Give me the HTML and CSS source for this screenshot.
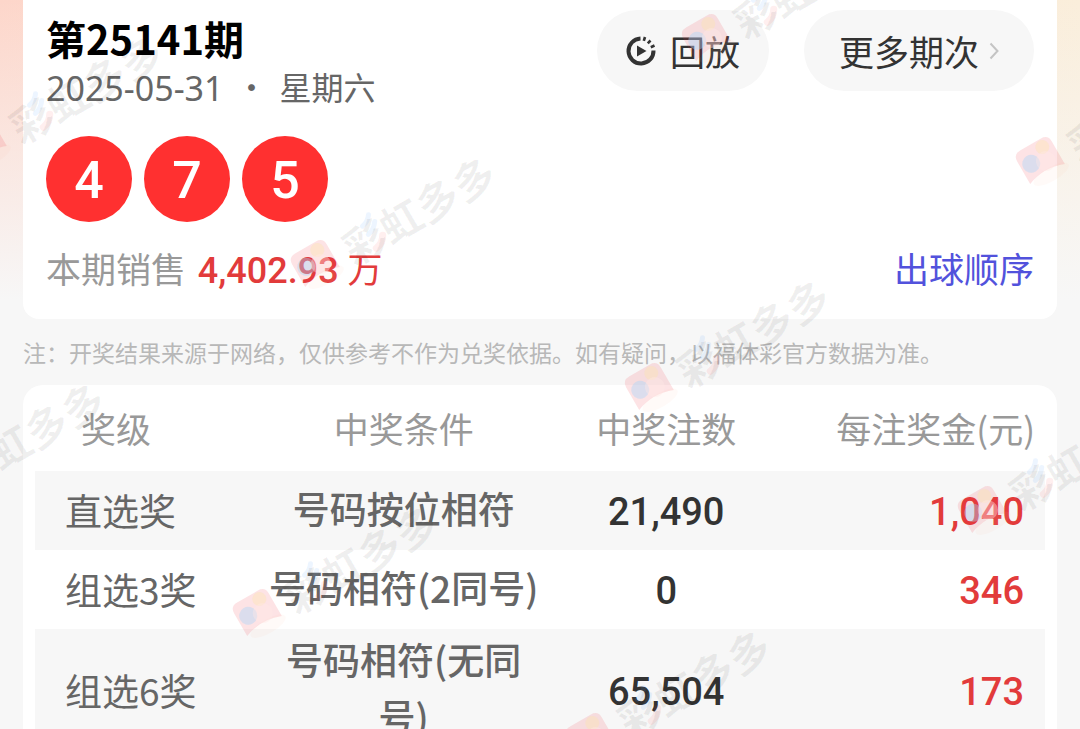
FILE: index.html
```html
<!DOCTYPE html>
<html lang="zh-CN">
<head>
  <meta charset="UTF-8">
  <meta name="viewport" content="width=device-width, initial-scale=1">
  <title>开奖详情</title>
  <link rel="stylesheet" href="styles.css">
</head>
<body>

<!-- Draw result -->
<section class="card draw">
  <div class="draw-top">
    <div class="draw-info">
      <h1>第25141期</h1>
      <p class="draw-date"><span class="date">2025-05-31</span><span>·</span><span>星期六</span></p>
    </div>
    <div class="actions">
      <button type="button" class="pill pill-replay">
        <svg class="icon-replay" viewBox="0 0 30 30" aria-hidden="true">
          <path d="M14.500 2.500 A12.500 12.500 0 1 0 27.500 14.500" fill="none" stroke="#333" stroke-width="4"/>
          <path d="M19 1 L17.800 4.800 M24.500 4.500 L21.800 7.400 M28.500 9.500 L24.800 11.200" stroke="#333" stroke-width="2.600"/>
          <path d="M11 9.500 L20.500 15 L11 20.500 Z" fill="#333"/>
        </svg>
        回放
      </button>
      <button type="button" class="pill pill-more">
        更多期次
        <svg class="icon-arrow" viewBox="0 0 10 18" aria-hidden="true">
          <path d="M1.500 1.500 L8.500 9 L1.500 16.500" fill="none" stroke="#c4c4c4" stroke-width="2"/>
        </svg>
      </button>
    </div>
  </div>

  <div class="balls">
    <span class="ball">4</span>
    <span class="ball">7</span>
    <span class="ball">5</span>
  </div>

  <div class="sales">
    <p>本期销售 <strong>4,402.93 <span class="unit">万</span></strong></p>
    <a href="#">出球顺序</a>
  </div>
</section>

<p class="note">注：开奖结果来源于网络，仅供参考不作为兑奖依据。如有疑问，以福体彩官方数据为准。</p>

<!-- Prize table -->
<section class="card prizes">
  <table>
    <thead>
      <tr>
        <th class="level">奖级</th>
        <th class="rule">中奖条件</th>
        <th class="count">中奖注数</th>
        <th class="money">每注奖金(元)</th>
      </tr>
    </thead>
    <tbody>
      <tr>
        <td class="level">直选奖</td>
        <td class="rule">号码按位相符</td>
        <td class="count">21,490</td>
        <td class="money">1,040</td>
      </tr>
      <tr>
        <td class="level">组选3奖</td>
        <td class="rule">号码相符(2同号)</td>
        <td class="count">0</td>
        <td class="money">346</td>
      </tr>
      <tr>
        <td class="level">组选6奖</td>
        <td class="rule">号码相符(无同号)</td>
        <td class="count">65,504</td>
        <td class="money">173</td>
      </tr>
    </tbody>
  </table>
</section>

<!-- Watermark layer -->
<svg class="watermarks" aria-hidden="true">
  <defs>
    <g id="mark">
      <g transform="rotate(-30)">
        <path d="M-20 15 V-11 Q-20 -19 -12 -19 H12 Q20 -19 20 -11 V15 Q0 7 -20 15 Z" fill="#f03a45" opacity=".14"/>
        <ellipse cx="3" cy="17" rx="20" ry="7" fill="#ffb9a0" opacity=".08"/>
        <circle cx="9" cy="-11" r="7" fill="#fbe6a8" opacity=".35"/>
        <circle cx="-9" cy="-2" r="9" fill="#a8d4fb" opacity=".4"/>
        <circle cx="5" cy="3" r="10" fill="#ffe9e6" opacity=".4"/>
        <text x="33" y="22" class="mark-text">彩虹多多</text>
        <path d="M60 -9 q7 -1 11 -7 M61 1 q7 -1 12 -8" fill="none" stroke="#4aa0ff" stroke-width="5" stroke-linecap="round" opacity=".1"/>
        <path d="M61 17 q8 -1 12 -8" fill="none" stroke="#ff4a4a" stroke-width="7" stroke-linecap="round" opacity=".09"/>
      </g>
    </g>
  </defs>
  <use href="#mark" x="-18" y="143"/>
  <use href="#mark" x="315" y="264"/>
  <use href="#mark" x="649" y="387"/>
  <use href="#mark" x="982" y="510"/>
  <use href="#mark" x="706" y="38"/>
  <use href="#mark" x="1040" y="161"/>
  <use href="#mark" x="-76" y="490"/>
  <use href="#mark" x="257" y="613"/>
  <use href="#mark" x="590" y="737"/>
</svg>

</body>
</html>
```
FILE: styles.css
```css
* {
  box-sizing: border-box;
}

body {
  margin: 0;
  padding: 0 23px;
  min-height: 100vh;
  position: relative;
  overflow: hidden;
  font-family: "Noto Sans CJK SC", sans-serif;
  color: #666;
  background:
    linear-gradient(to bottom, rgba(247, 247, 247, 0), #f7f7f7 300px),
    linear-gradient(to right, #fdd6ca, #faeedb);
}

h1, p {
  margin: 0;
}

.card {
  background: #fff;
}

/* Draw result */
.draw {
  padding: 10px 23px 23px;
  border-radius: 0 0 16px 16px;
}

.draw-top {
  display: flex;
  justify-content: space-between;
  align-items: flex-start;
}

h1 {
  padding-top: 2px;
  font-size: 40px;
  line-height: 52px;
  font-weight: 700;
  color: #000;
}

.draw-date {
  display: flex;
  gap: 12px;
  font-size: 32px;
  line-height: 44px;
}

.date {
  font-family: "Noto Sans", sans-serif;
  font-size: 34px;
  line-height: 48px;
}

.actions {
  display: flex;
  gap: 35px;
}

.pill {
  display: flex;
  align-items: center;
  justify-content: center;
  height: 81px;
  border: 0;
  border-radius: 41px;
  background: #f7f7f7;
  color: #333;
  font-family: inherit;
  font-size: 35px;
}

.pill-replay {
  width: 172px;
  gap: 14px;
}

.pill-more {
  width: 230px;
  gap: 10px;
}

.icon-replay {
  width: 30px;
  height: 30px;
}

.icon-arrow {
  width: 10px;
  height: 18px;
}

.balls {
  display: flex;
  gap: 12px;
  padding-top: 24px;
}

.ball {
  width: 86px;
  height: 86px;
  border-radius: 50%;
  background: #ff3030;
  color: #fff;
  font-family: Roboto, sans-serif;
  font-size: 52px;
  font-weight: 500;
  line-height: 90px;
  text-align: center;
}

.sales {
  display: flex;
  justify-content: space-between;
  padding-top: 21px;
  font-size: 35px;
  line-height: 50px;
  color: #999;
}

.sales strong {
  padding-left: 4px;
  font-family: Roboto, sans-serif;
  font-size: 36px;
  font-weight: 500;
  color: #e23b3b;
}

.sales .unit {
  font-family: "Noto Sans CJK SC", sans-serif;
  font-size: 35px;
  font-weight: 400;
}

.sales a {
  color: #5252dc;
  text-decoration: none;
}

.note {
  padding: 18px 0;
  font-size: 23px;
  line-height: 30px;
  color: #b8b8b8;
}

/* Prize table */
.prizes {
  padding: 0 12px;
  border-radius: 20px 20px 0 0;
}

table {
  width: 100%;
  border-collapse: collapse;
  table-layout: fixed;
}

th {
  height: 86px;
  padding: 0 0 2px;
  font-size: 35px;
  font-weight: 400;
  color: #999;
}

td {
  height: 79px;
  padding: 4px 0;
  font-size: 37px;
  line-height: 57px;
}

tbody tr:nth-child(odd) {
  background: #f7f7f7;
}

.level {
  width: 23%;
  text-align: left;
}

.rule {
  width: 27%;
  text-align: center;
}

.count,
.money {
  width: 25%;
  text-align: center;
}

th.level {
  padding-left: 46px;
}

td.level {
  padding-left: 30px;
}

td.rule {
  padding: 2px 0 6px;
  font-weight: 500;
}

td.count,
td.money {
  padding-top: 8px;
  font-family: Roboto, sans-serif;
  font-size: 38px;
  font-weight: 500;
  color: #333;
}

td.money {
  padding-right: 21px;
  text-align: right;
  color: #e23b3b;
}

th.money {
  padding-right: 10px;
  text-align: right;
}

/* Watermark */
.watermarks {
  position: absolute;
  top: 0;
  left: 0;
  width: 100%;
  height: 100%;
  pointer-events: none;
}

.mark-text {
  font-size: 42px;
  font-weight: 700;
  fill: #000;
  fill-opacity: 0.06;
}
```
